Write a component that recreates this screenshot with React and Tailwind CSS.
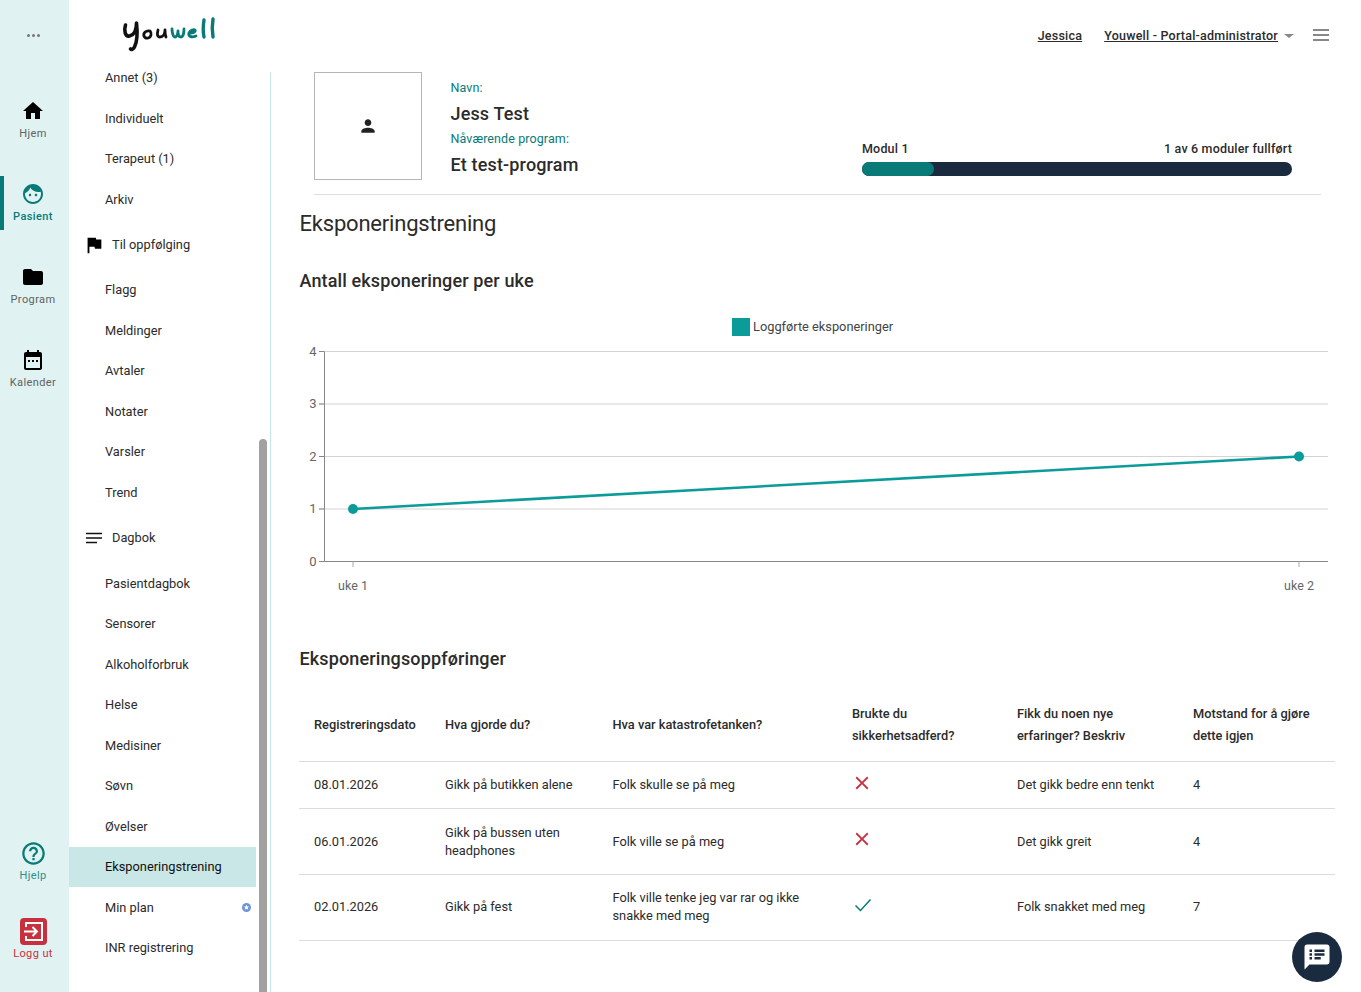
const Icon = ({ d, className }) => (
  <svg viewBox="0 0 24 24" fill="currentColor" className={className}>
    <path d={d} />
  </svg>
);

const paths = {
  home: "M10 20v-6h4v6h5v-8h3L12 3 2 12h3v8z",
  folder: "M10 4H4c-1.1 0-1.99.9-1.99 2L2 18c0 1.1.9 2 2 2h16c1.1 0 2-.9 2-2V8c0-1.1-.9-2-2-2h-8l-2-2z",
  calendar: "M9 12H7v2h2v-2zm4 0h-2v2h2v-2zm4 0h-2v2h2v-2zm2-8h-1V2h-2v2H8V2H6v2H5c-1.11 0-1.99.9-1.99 2L3 20c0 1.1.89 2 2 2h14c1.1 0 2-.9 2-2V6c0-1.1-.9-2-2-2zm0 16H5V9h14v11z",
  face: "M9 11.75c-.69 0-1.25.56-1.25 1.25s.56 1.25 1.25 1.25 1.25-.56 1.25-1.25-.56-1.25-1.25-1.25zm6 0c-.69 0-1.25.56-1.25 1.25s.56 1.25 1.25 1.25 1.25-.56 1.25-1.25-.56-1.25-1.25-1.25zM12 2C6.48 2 2 6.48 2 12s4.48 10 10 10 10-4.48 10-10S17.52 2 12 2zm0 18c-4.41 0-8-3.59-8-8 0-.29.02-.58.05-.86 2.36-1.05 4.23-2.98 5.21-5.37C11.07 8.33 14.05 10 17.42 10c.78 0 1.53-.09 2.25-.26.21.71.33 1.47.33 2.26 0 4.41-3.59 8-8 8z",
  help: "M11 18h2v-2h-2v2zm1-16C6.48 2 2 6.48 2 12s4.48 10 10 10 10-4.48 10-10S17.52 2 12 2zm0 18c-4.41 0-8-3.59-8-8s3.59-8 8-8 8 3.59 8 8-3.59 8-8 8zm0-14c-2.21 0-4 1.79-4 4h2c0-1.1.9-2 2-2s2 .9 2 2c0 2-3 1.75-3 5h2c0-2.25 3-2.5 3-5 0-2.21-1.79-4-4-4z",
  flag: "M14.4 6L14 4H5v17h2v-7h5.6l.4 2h7V6z",
  person: "M12 12c2.21 0 4-1.79 4-4s-1.79-4-4-4-4 1.79-4 4 1.79 4 4 4zm0 2c-2.67 0-8 1.34-8 4v2h16v-2c0-2.66-5.33-4-8-4z",
  notes: "M20 2H4c-1.1 0-1.99.9-1.99 2L2 22l4-4h14c1.1 0 2-.9 2-2V4c0-1.1-.9-2-2-2zM8 14H6v-2h2v2zm0-3H6V9h2v2zm0-3H6V6h2v2zm7 6h-5v-2h5v2zm3-3h-8V9h8v2zm0-3h-8V6h8v2z",
  clear: "M19 6.41L17.59 5 12 10.59 6.41 5 5 6.41 10.59 12 5 17.59 6.41 19 12 13.41 17.59 19 19 17.59 13.41 12z",
};

function RailItem({ icon, label, active, className = "" }) {
  return (
    <div className={`relative flex flex-col items-center pr-[3px] ${className}`}>
      {active && <div className="absolute left-0 top-[-6px] h-[54px] w-[4px] bg-[#087b79]" />}
      <Icon d={icon} className={`h-6 w-6 ${active ? "text-[#087b79]" : "text-black"}`} />
      <span className={`mt-[4px] text-[11px] leading-[14px] tracking-[0.4px] ${active ? "font-medium text-[#087b79]" : "text-[#5f6363]"}`}>
        {label}
      </span>
    </div>
  );
}

function Rail() {
  return (
    <div className="flex w-[69px] shrink-0 flex-col items-stretch bg-[#e0f2f1]">
      <div className="flex h-[99px] items-start justify-center pr-[3px] pt-[34px]">
        <div className="flex gap-[2px]">
          <span className="h-[3px] w-[3px] rounded-full bg-[#777]" />
          <span className="h-[3px] w-[3px] rounded-full bg-[#777]" />
          <span className="h-[3px] w-[3px] rounded-full bg-[#777]" />
        </div>
      </div>
      <RailItem icon={paths.home} label="Hjem" />
      <RailItem icon={paths.face} label="Pasient" active className="mt-[41px]" />
      <RailItem icon={paths.folder} label="Program" className="mt-[41px]" />
      <RailItem icon={paths.calendar} label="Kalender" className="mt-[41px]" />
      <div className="mt-auto flex flex-col items-center pb-[31px] pr-[3px]">
        <Icon d={paths.help} className="h-[27px] w-[27px] text-[#087b79]" />
        <span className="mt-[2px] text-[11px] leading-[14px] tracking-[0.4px] text-[#2f8f8d]">Hjelp</span>
        <svg viewBox="0 0 27 27" className="mt-[35px] h-[27px] w-[27px]">
          <rect width="27" height="27" rx="4" fill="#c9303e" />
          <path d="M6 9V5h16v17H6v-4" fill="none" stroke="#fff" strokeWidth="2" />
          <path d="M4 13.5h13M12.5 9l4.5 4.5-4.5 4.5" fill="none" stroke="#fff" strokeWidth="2" />
        </svg>
        <span className="mt-[2px] text-[11px] leading-[14px] tracking-[0.4px] text-[#c9303e]">Logg ut</span>
      </div>
    </div>
  );
}

function Logo() {
  return (
    <svg viewBox="0 0 100 36" role="img" aria-label="Youwell" className="h-[36px] w-[100px]" fill="none" strokeLinecap="round" strokeLinejoin="round">
      <path d="M3.5 8c-2 6 0 12 4 11 5-1 7-7 7-13 1 9 1 18-2 24-1 2-3 3-4 2" stroke="#111" strokeWidth="3.6" />
      <path d="M28 14c-4-1-7 2-6 5 1 3 6 3 7-1 .5-2 0-3-1-4" stroke="#111" strokeWidth="2.8" />
      <path d="M36 13c-1 4-1 7 2 7 3 0 5-3 5-7 0 3 0 5 1 7" stroke="#111" strokeWidth="2.8" />
      <path d="M50 12c0 3 1 8 3 8s3-4 3-6c0 3 1 6 3 6s3-4 3-8" stroke="#087b79" strokeWidth="2.8" />
      <path d="M68 16c3 0 6-1 5-3-1-1-5 0-6 3-1 3 2 5 7 3" stroke="#087b79" strokeWidth="2.8" />
      <path d="M82 3c-1 6-1 12 0 17M91 2c-1 6-1 12 0 18" stroke="#087b79" strokeWidth="3.4" />
    </svg>
  );
}

const groups = [
  { items: ["Annet (3)", "Individuelt", "Terapeut (1)", "Arkiv"] },
  { title: "Til oppfølging", icon: "flag", items: ["Flagg", "Meldinger", "Avtaler", "Notater", "Varsler", "Trend"] },
  {
    title: "Dagbok",
    icon: "lines",
    items: ["Pasientdagbok", "Sensorer", "Alkoholforbruk", "Helse", "Medisiner", "Søvn", "Øvelser", "Eksponeringstrening", "Min plan", "INR registrering"],
  },
];

function Sidebar() {
  return (
    <div className="flex w-[202px] shrink-0">
      <div className="w-[187px] shrink-0">
        <div className="flex h-[57.5px] items-start pl-[53px] pt-[17px]">
          <Logo />
        </div>
        {groups.map((g, i) => (
          <div key={i}>
            {g.title && (
              <div className="flex h-[50.25px] items-center pl-[16px] text-[12.8px] text-[#2b2b2b]">
                {g.icon === "flag" ? (
                  <>
                    <Icon d={paths.flag} className="-ml-[2.5px] h-[22px] w-[22px] text-black" />
                    <span className="ml-[7.5px]">{g.title}</span>
                  </>
                ) : (
                  <>
                    <svg viewBox="0 0 18 18" className="h-[18px] w-[18px]">
                      <path d="M1 4.5h16M1 9h16M1 13.5h11" stroke="#111" strokeWidth="1.6" />
                    </svg>
                    <span className="ml-[9px]">{g.title}</span>
                  </>
                )}
              </div>
            )}
            {g.items.map((item) => (
              <div
                key={item}
                className={`relative flex h-[40.5px] items-center pl-[36px] text-[12.8px] text-[#2b2b2b] ${item === "Eksponeringstrening" ? "bg-[#c9e7e6] text-[#111]" : ""}`}
              >
                {item}
                {item === "Min plan" && (
                  <svg viewBox="0 0 10 10" className="absolute right-[5px] top-[16px] h-[9px] w-[9px]">
                    <circle cx="5" cy="5" r="5" fill="#6d94d8" />
                    <path d="M5 2l.9 2h2.1L6.4 5.4 7 7.6 5 6.4 3 7.6l.6-2.2L2 4h2.1z" fill="#fff" />
                  </svg>
                )}
              </div>
            ))}
          </div>
        ))}
      </div>
      <div className="ml-[3px] w-[8px] pt-[439px]">
        <div className="h-[553px] rounded-t-[4px] bg-[#a1a1a1]" />
      </div>
      <div className="ml-[3px] mt-[72px] w-px bg-[#c5e8e6]" />
    </div>
  );
}

function Chart() {
  const ys = [351.5, 404, 456.5, 509, 561.5].map((y) => y - 310);
  return (
    <svg viewBox="0 0 1040 300" className="h-[300px] w-[1040px]" style={{ fontFamily: "Roboto, sans-serif" }}>
      <rect x="433" y="8" width="18" height="18" fill="#0b9c9a" />
      <text x="454" y="21" fontSize="12.8" fill="#444">Loggførte eksponeringer</text>
      {ys.map((y, i) => (
        <g key={i}>
          <line x1="20" x2="1029" y1={y} y2={y} stroke={i === 4 ? "#888" : "#d4d4d4"} strokeWidth="1" />
          <line x1="20" x2="25" y1={y} y2={y} stroke="#888" strokeWidth="1" />
          <text x="17.5" y={y + 4} fontSize="13" fill="#666" textAnchor="end">{4 - i}</text>
        </g>
      ))}
      <line x1="25.5" x2="25.5" y1="41.5" y2="251.5" stroke="#888" />
      <line x1="54" x2="54" y1="251.5" y2="257" stroke="#aaa" />
      <line x1="1000" x2="1000" y1="251.5" y2="257" stroke="#aaa" />
      <text x="54" y="280" fontSize="12.5" fill="#666" textAnchor="middle">uke 1</text>
      <text x="1000" y="280" fontSize="12.5" fill="#666" textAnchor="middle">uke 2</text>
      <line x1="54" y1="199" x2="1000" y2="146.5" stroke="#0b9c9a" strokeWidth="2.6" />
      <circle cx="54" cy="199" r="5" fill="#0b9c9a" />
      <circle cx="1000" cy="146.5" r="5" fill="#0b9c9a" />
    </svg>
  );
}

const rows = [
  { date: "08.01.2026", did: "Gikk på butikken alene", thought: "Folk skulle se på meg", safe: false, learn: "Det gikk bedre enn tenkt", score: 4, h: "h-[47px]", pad: "px-[15px]", mark: "mb-[3px]" },
  { date: "06.01.2026", did: "Gikk på bussen uten headphones", thought: "Folk ville se på meg", safe: false, learn: "Det gikk greit", score: 4, h: "h-[66px]", pad: "px-[15px] pt-[1px]", mark: "mb-[5px]" },
  { date: "02.01.2026", did: "Gikk på fest", thought: "Folk ville tenke jeg var rar og ikke snakke med meg", safe: true, learn: "Folk snakket med meg", score: 7, h: "h-[66px]", pad: "px-[15px]", mark: "mb-[5px]" },
];

function EntryTable() {
  return (
    <table className="w-[1036px] table-fixed border-collapse text-[12.8px] text-[#2b2b2b]">
      <colgroup>
        <col className="w-[131px]" />
        <col className="w-[167.5px]" />
        <col className="w-[239.5px]" />
        <col className="w-[165px]" />
        <col className="w-[176px]" />
        <col />
      </colgroup>
      <thead>
        <tr className="h-[71px] border-b border-[#dcdcdc] text-left leading-[22px]">
          <th className="px-[15px] font-medium">Registreringsdato</th>
          <th className="px-[15px] font-medium">Hva gjorde du?</th>
          <th className="px-[15px] font-medium">Hva var katastrofetanken?</th>
          <th className="px-[15px] font-medium">Brukte du sikkerhetsadferd?</th>
          <th className="px-[15px] font-medium">Fikk du noen nye erfaringer? Beskriv</th>
          <th className="px-[15px] font-medium">Motstand for å gjøre dette igjen</th>
        </tr>
      </thead>
      <tbody className="leading-[18px]">
        {rows.map((r) => (
          <tr key={r.date} className={`${r.h} border-b border-[#dcdcdc]`}>
            <td className={r.pad}>{r.date}</td>
            <td className={r.pad}>{r.did}</td>
            <td className={r.pad}>{r.thought}</td>
            <td className="px-[15px]">
              {r.safe ? (
                <svg viewBox="0 0 18 14" className={`ml-[2px] h-[14px] w-[18px] ${r.mark}`}>
                  <path d="M1.5 7.5l5 5L16.5 1.5" fill="none" stroke="#087b79" strokeWidth="1.5" />
                </svg>
              ) : (
                <Icon d={paths.clear} className={`-ml-[1px] h-[22px] w-[22px] text-[#c9303e] ${r.mark}`} />
              )}
            </td>
            <td className={r.pad}>{r.learn}</td>
            <td className={r.pad}>{r.score}</td>
          </tr>
        ))}
      </tbody>
    </table>
  );
}

export default function App() {
  return (
    <div className="relative flex h-[992px] overflow-hidden bg-white font-['Roboto',sans-serif]">
      <Rail />
      <Sidebar />
      <main className="min-w-0 flex-1 pl-[28px]">
        <div className="flex h-[72px] items-start justify-end pr-[32px] pt-[27px] text-[12.5px] font-medium leading-[17px] tracking-[0.22px] text-[#2b2b2b]">
          <a className="underline">Jessica</a>
          <a className="ml-[22px] underline">Youwell - Portal-administrator</a>
          <span className="ml-[6px] mt-[7px] h-0 w-0 border-x-[5px] border-t-[4px] border-x-transparent border-t-[#888]" />
          <div className="ml-[19px] mt-[2px] flex w-[16px] flex-col gap-[3px]">
            <span className="h-[2px] bg-[#888]" />
            <span className="h-[2px] bg-[#888]" />
            <span className="h-[2px] bg-[#888]" />
          </div>
        </div>

        <div className="ml-[15px] mr-[40px] flex h-[123px] items-start border-b border-[#dedede]">
          <div className="flex h-[108px] w-[108px] items-center justify-center border border-[#b5b5b5]">
            <Icon d={paths.person} className="h-[20px] w-[20px] text-[#222]" />
          </div>
          <div className="ml-[28.5px] pt-[8px] text-[#2b2b2b]">
            <div className="text-[12.5px] leading-[16px] tracking-[0.1px] text-[#087b79]">Navn:</div>
            <div className="mt-[6px] text-[18px] font-medium leading-[24px] tracking-[0.15px]">Jess Test</div>
            <div className="mt-[5px] text-[12.5px] leading-[16px] tracking-[0.1px] text-[#087b79]">Nåværende program:</div>
            <div className="mt-[6px] text-[18px] font-medium leading-[24px] tracking-[0.15px]">Et test-program</div>
          </div>
          <div className="ml-auto mr-[29px] mt-[69px] w-[430px]">
            <div className="flex justify-between text-[12.5px] font-medium leading-[16px] tracking-[0.18px] text-[#2b2b2b]">
              <span>Modul 1</span>
              <span>1 av 6 moduler fullført</span>
            </div>
            <div className="mt-[5px] h-[14px] rounded-[7px] bg-[#1b2b3f]">
              <div className="h-[14px] w-[72px] rounded-[7px] bg-[#087b79]" />
            </div>
          </div>
        </div>

        <h1 className="ml-[0.5px] mt-[14px] text-[22px] font-normal leading-[30px] tracking-[-0.2px] text-[#2b2b2b]">Eksponeringstrening</h1>
        <h2 className="ml-[0.5px] mt-[30px] text-[18px] font-medium leading-[24px] tracking-[0.13px] text-[#2b2b2b]">Antall eksponeringer per uke</h2>
        <div className="mt-[17px]">
          <Chart />
        </div>
        <h2 className="ml-[0.5px] mt-[37px] text-[18px] font-medium leading-[24px] tracking-[0.13px] text-[#2b2b2b]">Eksponeringsoppføringer</h2>
        <div className="mt-[19px]">
          <EntryTable />
        </div>
      </main>
      <div className="absolute left-[1292px] top-[932px] flex h-[50px] w-[50px] items-center justify-center rounded-full bg-[#1b2b3f]">
        <Icon d={paths.notes} className="h-[30px] w-[30px] text-white" />
      </div>
    </div>
  );
}
